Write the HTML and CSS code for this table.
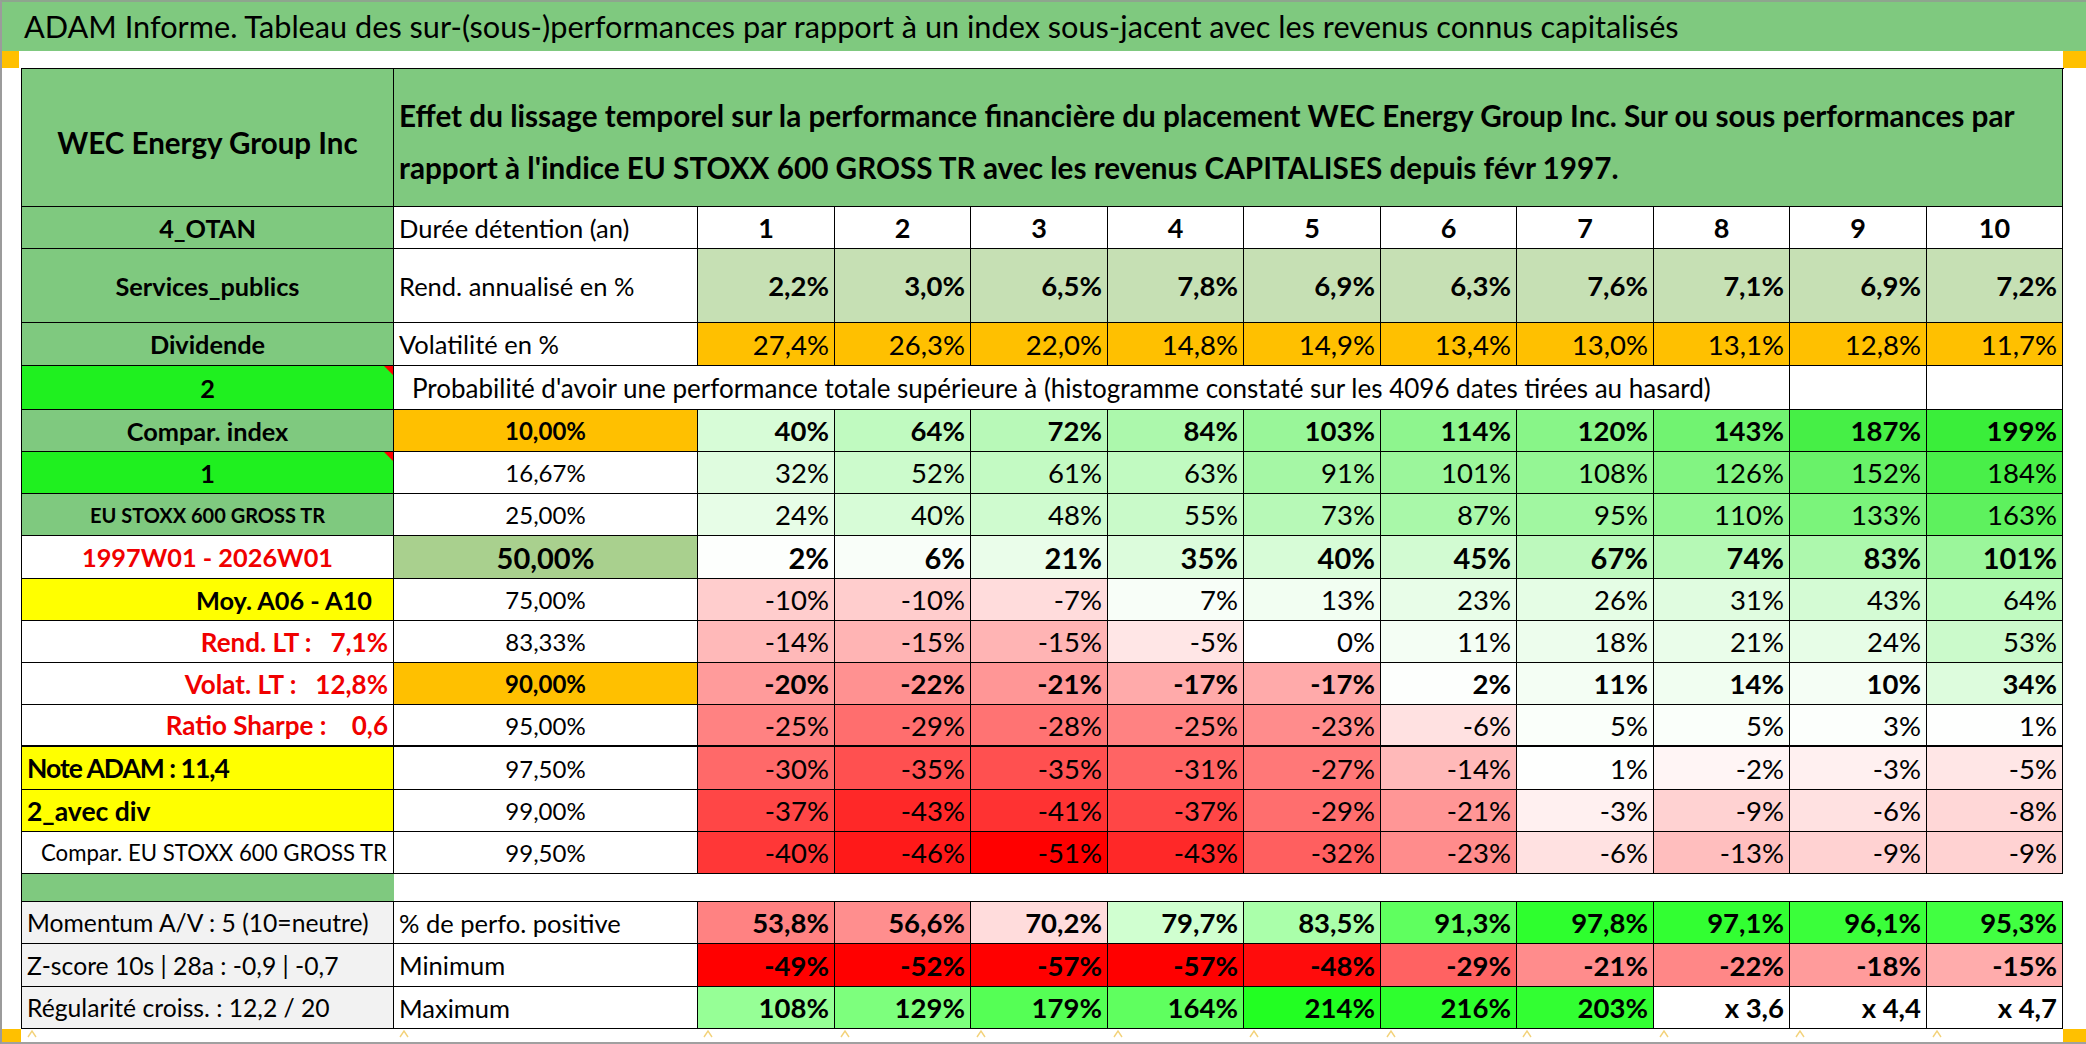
FILE: index.html
```html
<!DOCTYPE html>
<html lang="fr">
<head>
<meta charset="utf-8">
<title>ADAM Informe</title>
<link rel="stylesheet" href="styles.css">
</head>
<body>
<div class="sheet">
  <div class="title">ADAM Informe. Tableau des sur-(sous-)performances par rapport à un index sous-jacent avec les revenus connus capitalisés</div>
  <div class="gap"><span class="handle handle-l"></span><span class="handle handle-r"></span></div>
  <div class="grid">
    <!-- header -->
    <div class="c a hdr-a">WEC Energy Group Inc</div>
    <div class="c hdr-b"><span>Effet du lissage temporel sur la performance financière du placement WEC Energy Group Inc. Sur ou sous performances par</span><span>rapport à l'indice EU STOXX 600 GROSS TR avec les revenus CAPITALISES depuis févr 1997.</span></div>

    <div class="c a bold">4_OTAN</div>
    <div class="c b">Durée détention (an)</div>
    <div class="c h">1</div><div class="c h">2</div><div class="c h">3</div><div class="c h">4</div><div class="c h">5</div><div class="c h">6</div><div class="c h">7</div><div class="c h">8</div><div class="c h">9</div><div class="c h">10</div>

    <div class="c a bold">Services_publics</div>
    <div class="c b">Rend. annualisé en %</div>
    <div class="c n bold rend">2,2%</div><div class="c n bold rend">3,0%</div><div class="c n bold rend">6,5%</div><div class="c n bold rend">7,8%</div><div class="c n bold rend">6,9%</div><div class="c n bold rend">6,3%</div><div class="c n bold rend">7,6%</div><div class="c n bold rend">7,1%</div><div class="c n bold rend">6,9%</div><div class="c n bold rend">7,2%</div>

    <div class="c a bold">Dividende</div>
    <div class="c b">Volatilité en %</div>
    <div class="c n orange">27,4%</div><div class="c n orange">26,3%</div><div class="c n orange">22,0%</div><div class="c n orange">14,8%</div><div class="c n orange">14,9%</div><div class="c n orange">13,4%</div><div class="c n orange">13,0%</div><div class="c n orange">13,1%</div><div class="c n orange">12,8%</div><div class="c n orange">11,7%</div>

    <div class="c a bold lime note">2</div>
    <div class="c prob">Probabilité d'avoir une performance totale supérieure à (histogramme constaté sur les 4096 dates tirées au hasard)</div>
    <div class="c"></div><div class="c"></div>

    <div class="c a bold">Compar. index</div>
    <div class="c p bold orange">10,00%</div>
    <div class="c n bold" style="background:rgb(215,252,215)">40%</div><div class="c n bold" style="background:rgb(192,250,192)">64%</div><div class="c n bold" style="background:rgb(184,249,184)">72%</div><div class="c n bold" style="background:rgb(172,248,172)">84%</div><div class="c n bold" style="background:rgb(153,246,153)">103%</div><div class="c n bold" style="background:rgb(142,245,142)">114%</div><div class="c n bold" style="background:rgb(136,245,136)">120%</div><div class="c n bold" style="background:rgb(113,243,113)">143%</div><div class="c n bold" style="background:rgb(70,239,70)">187%</div><div class="c n bold" style="background:rgb(58,238,58)">199%</div>

    <div class="c a bold lime note">1</div>
    <div class="c p">16,67%</div>
    <div class="c n" style="background:rgb(223,252,223)">32%</div><div class="c n" style="background:rgb(204,251,204)">52%</div><div class="c n" style="background:rgb(195,250,195)">61%</div><div class="c n" style="background:rgb(193,250,193)">63%</div><div class="c n" style="background:rgb(165,247,165)">91%</div><div class="c n" style="background:rgb(155,246,155)">101%</div><div class="c n" style="background:rgb(148,246,148)">108%</div><div class="c n" style="background:rgb(130,244,130)">126%</div><div class="c n" style="background:rgb(105,242,105)">152%</div><div class="c n" style="background:rgb(73,239,73)">184%</div>

    <div class="c a bold small">EU STOXX 600 GROSS TR</div>
    <div class="c p">25,00%</div>
    <div class="c n" style="background:rgb(231,253,231)">24%</div><div class="c n" style="background:rgb(215,252,215)">40%</div><div class="c n" style="background:rgb(207,251,207)">48%</div><div class="c n" style="background:rgb(201,250,201)">55%</div><div class="c n" style="background:rgb(183,249,183)">73%</div><div class="c n" style="background:rgb(169,248,169)">87%</div><div class="c n" style="background:rgb(161,247,161)">95%</div><div class="c n" style="background:rgb(146,246,146)">110%</div><div class="c n" style="background:rgb(123,244,123)">133%</div><div class="c n" style="background:rgb(94,241,94)">163%</div>

    <div class="c a bold red white">1997W01 - 2026W01</div>
    <div class="c p bold big sage">50,00%</div>
    <div class="c n bold big" style="background:rgb(253,255,253)">2%</div><div class="c n bold big" style="background:rgb(249,254,249)">6%</div><div class="c n bold big" style="background:rgb(234,253,234)">21%</div><div class="c n bold big" style="background:rgb(220,252,220)">35%</div><div class="c n bold big" style="background:rgb(215,252,215)">40%</div><div class="c n bold big" style="background:rgb(210,251,210)">45%</div><div class="c n bold big" style="background:rgb(189,249,189)">67%</div><div class="c n bold big" style="background:rgb(182,249,182)">74%</div><div class="c n bold big" style="background:rgb(173,248,173)">83%</div><div class="c n bold big" style="background:rgb(155,246,155)">101%</div>

    <div class="c a bold yellow right moy">Moy. A06 - A10</div>
    <div class="c p">75,00%</div>
    <div class="c n" style="background:rgb(255,205,205)">-10%</div><div class="c n" style="background:rgb(255,205,205)">-10%</div><div class="c n" style="background:rgb(255,220,220)">-7%</div><div class="c n" style="background:rgb(248,254,248)">7%</div><div class="c n" style="background:rgb(242,254,242)">13%</div><div class="c n" style="background:rgb(232,253,232)">23%</div><div class="c n" style="background:rgb(229,253,229)">26%</div><div class="c n" style="background:rgb(224,252,224)">31%</div><div class="c n" style="background:rgb(212,251,212)">43%</div><div class="c n" style="background:rgb(192,250,192)">64%</div>

    <div class="c a bold red white right lt">Rend. LT :   7,1%</div>
    <div class="c p">83,33%</div>
    <div class="c n" style="background:rgb(255,185,185)">-14%</div><div class="c n" style="background:rgb(255,180,180)">-15%</div><div class="c n" style="background:rgb(255,180,180)">-15%</div><div class="c n" style="background:rgb(255,230,230)">-5%</div><div class="c n" style="background:rgb(255,255,255)">0%</div><div class="c n" style="background:rgb(244,254,244)">11%</div><div class="c n" style="background:rgb(237,253,237)">18%</div><div class="c n" style="background:rgb(234,253,234)">21%</div><div class="c n" style="background:rgb(231,253,231)">24%</div><div class="c n" style="background:rgb(203,250,203)">53%</div>

    <div class="c a bold red white right lt">Volat. LT :   12,8%</div>
    <div class="c p bold orange">90,00%</div>
    <div class="c n bold" style="background:rgb(255,155,155)">-20%</div><div class="c n bold" style="background:rgb(255,145,145)">-22%</div><div class="c n bold" style="background:rgb(255,150,150)">-21%</div><div class="c n bold" style="background:rgb(255,170,170)">-17%</div><div class="c n bold" style="background:rgb(255,170,170)">-17%</div><div class="c n bold" style="background:rgb(253,255,253)">2%</div><div class="c n bold" style="background:rgb(244,254,244)">11%</div><div class="c n bold" style="background:rgb(241,254,241)">14%</div><div class="c n bold" style="background:rgb(245,254,245)">10%</div><div class="c n bold" style="background:rgb(221,252,221)">34%</div>

    <div class="c a bold red white right lt thick">Ratio Sharpe :    0,6</div>
    <div class="c p thick">95,00%</div>
    <div class="c n thick" style="background:rgb(255,130,130)">-25%</div><div class="c n thick" style="background:rgb(255,110,110)">-29%</div><div class="c n thick" style="background:rgb(255,115,115)">-28%</div><div class="c n thick" style="background:rgb(255,130,130)">-25%</div><div class="c n thick" style="background:rgb(255,140,140)">-23%</div><div class="c n thick" style="background:rgb(255,225,225)">-6%</div><div class="c n thick" style="background:rgb(250,255,250)">5%</div><div class="c n thick" style="background:rgb(250,255,250)">5%</div><div class="c n thick" style="background:rgb(252,255,252)">3%</div><div class="c n thick" style="background:rgb(254,255,254)">1%</div>

    <div class="c a bold yellow left note-adam tight">Note ADAM : 11,4</div>
    <div class="c p">97,50%</div>
    <div class="c n" style="background:rgb(255,105,105)">-30%</div><div class="c n" style="background:rgb(255,80,80)">-35%</div><div class="c n" style="background:rgb(255,80,80)">-35%</div><div class="c n" style="background:rgb(255,100,100)">-31%</div><div class="c n" style="background:rgb(255,120,120)">-27%</div><div class="c n" style="background:rgb(255,185,185)">-14%</div><div class="c n" style="background:rgb(254,255,254)">1%</div><div class="c n" style="background:rgb(255,245,245)">-2%</div><div class="c n" style="background:rgb(255,240,240)">-3%</div><div class="c n" style="background:rgb(255,230,230)">-5%</div>

    <div class="c a bold yellow left note-adam">2_avec div</div>
    <div class="c p">99,00%</div>
    <div class="c n" style="background:rgb(255,70,70)">-37%</div><div class="c n" style="background:rgb(255,40,40)">-43%</div><div class="c n" style="background:rgb(255,50,50)">-41%</div><div class="c n" style="background:rgb(255,70,70)">-37%</div><div class="c n" style="background:rgb(255,110,110)">-29%</div><div class="c n" style="background:rgb(255,150,150)">-21%</div><div class="c n" style="background:rgb(255,240,240)">-3%</div><div class="c n" style="background:rgb(255,210,210)">-9%</div><div class="c n" style="background:rgb(255,225,225)">-6%</div><div class="c n" style="background:rgb(255,215,215)">-8%</div>

    <div class="c a white right compeu">Compar. EU STOXX 600 GROSS TR</div>
    <div class="c p">99,50%</div>
    <div class="c n" style="background:rgb(255,55,55)">-40%</div><div class="c n" style="background:rgb(255,25,25)">-46%</div><div class="c n" style="background:rgb(255,0,0)">-51%</div><div class="c n" style="background:rgb(255,40,40)">-43%</div><div class="c n" style="background:rgb(255,95,95)">-32%</div><div class="c n" style="background:rgb(255,140,140)">-23%</div><div class="c n" style="background:rgb(255,225,225)">-6%</div><div class="c n" style="background:rgb(255,190,190)">-13%</div><div class="c n" style="background:rgb(255,210,210)">-9%</div><div class="c n" style="background:rgb(255,210,210)">-9%</div>

    <div class="c a spacer-a"></div>
    <div class="c spacer-b"></div>

    <div class="c a grey left">Momentum A/V : 5 (10=neutre)</div>
    <div class="c b">% de perfo. positive</div>
    <div class="c n bold" style="background:rgb(255,130,130)">53,8%</div><div class="c n bold" style="background:rgb(255,142,142)">56,6%</div><div class="c n bold" style="background:rgb(255,220,220)">70,2%</div><div class="c n bold" style="background:rgb(208,255,208)">79,7%</div><div class="c n bold" style="background:rgb(170,255,170)">83,5%</div><div class="c n bold" style="background:rgb(95,255,95)">91,3%</div><div class="c n bold" style="background:rgb(46,255,46)">97,8%</div><div class="c n bold" style="background:rgb(50,255,50)">97,1%</div><div class="c n bold" style="background:rgb(58,255,58)">96,1%</div><div class="c n bold" style="background:rgb(65,255,65)">95,3%</div>

    <div class="c a grey left">Z-score 10s | 28a : -0,9 | -0,7</div>
    <div class="c b">Minimum</div>
    <div class="c n bold" style="background:rgb(255,0,0)">-49%</div><div class="c n bold" style="background:rgb(255,0,0)">-52%</div><div class="c n bold" style="background:rgb(255,0,0)">-57%</div><div class="c n bold" style="background:rgb(255,0,0)">-57%</div><div class="c n bold" style="background:rgb(255,12,12)">-48%</div><div class="c n bold" style="background:rgb(255,98,98)">-29%</div><div class="c n bold" style="background:rgb(255,140,140)">-21%</div><div class="c n bold" style="background:rgb(255,135,135)">-22%</div><div class="c n bold" style="background:rgb(255,155,155)">-18%</div><div class="c n bold" style="background:rgb(255,172,172)">-15%</div>

    <div class="c a grey left">Régularité croiss. : 12,2 / 20</div>
    <div class="c b">Maximum</div>
    <div class="c n bold" style="background:rgb(150,255,150)">108%</div><div class="c n bold" style="background:rgb(125,255,125)">129%</div><div class="c n bold" style="background:rgb(85,255,85)">179%</div><div class="c n bold" style="background:rgb(95,255,95)">164%</div><div class="c n bold" style="background:rgb(34,255,34)">214%</div><div class="c n bold" style="background:rgb(46,255,46)">216%</div><div class="c n bold" style="background:rgb(50,255,50)">203%</div><div class="c n bold">x 3,6</div><div class="c n bold">x 4,4</div><div class="c n bold">x 4,7</div>
  </div>
  <div class="foot">
    <span class="handle handle-bl"></span><span class="handle handle-br"></span>
    <div class="marks">
      <span class="mark"><svg width="10" height="8" viewBox="0 0 10 8"><path d="M1 7 L5 1 L9 7" /></svg></span>
      <span class="mark"><svg width="10" height="8" viewBox="0 0 10 8"><path d="M1 7 L5 1 L9 7" /></svg></span>
      <span class="mark"><svg width="10" height="8" viewBox="0 0 10 8"><path d="M1 7 L5 1 L9 7" /></svg></span>
      <span class="mark"><svg width="10" height="8" viewBox="0 0 10 8"><path d="M1 7 L5 1 L9 7" /></svg></span>
      <span class="mark"><svg width="10" height="8" viewBox="0 0 10 8"><path d="M1 7 L5 1 L9 7" /></svg></span>
      <span class="mark"><svg width="10" height="8" viewBox="0 0 10 8"><path d="M1 7 L5 1 L9 7" /></svg></span>
      <span class="mark"><svg width="10" height="8" viewBox="0 0 10 8"><path d="M1 7 L5 1 L9 7" /></svg></span>
      <span class="mark"><svg width="10" height="8" viewBox="0 0 10 8"><path d="M1 7 L5 1 L9 7" /></svg></span>
      <span class="mark"><svg width="10" height="8" viewBox="0 0 10 8"><path d="M1 7 L5 1 L9 7" /></svg></span>
      <span class="mark"><svg width="10" height="8" viewBox="0 0 10 8"><path d="M1 7 L5 1 L9 7" /></svg></span>
      <span class="mark"><svg width="10" height="8" viewBox="0 0 10 8"><path d="M1 7 L5 1 L9 7" /></svg></span>
      <span class="mark"><svg width="10" height="8" viewBox="0 0 10 8"><path d="M1 7 L5 1 L9 7" /></svg></span>
    </div>
  </div>
</div>
</body>
</html>
```

FILE: styles.css
```css
html, body {
  margin: 0;
  padding: 0;
  background: #ffffff;
}

body {
  font-family: Lato, "Noto Sans", "Liberation Sans", sans-serif;
  color: #000;
}

.sheet {
  width: 2086px;
  height: 1044px;
  box-sizing: border-box;
  border-left: 2px solid #9b9b9b;
  border-top: 2px solid #8ea58e;
  border-bottom: 2px solid #a0a0a0;
  display: flex;
  flex-direction: column;
  overflow: hidden;
}

.title {
  height: 49px;
  flex: none;
  background: #7fc97f;
  padding-left: 22px;
  font-size: 30.7px;
  line-height: 49px;
  white-space: nowrap;
}

.gap {
  height: 17px;
  flex: none;
  position: relative;
}

.handle {
  position: absolute;
  background: #ffc000;
}

.handle-l { left: 0; top: 0; width: 17px; height: 17px; }
.handle-r { right: 0; top: 0; width: 23px; height: 17px; }

.grid {
  flex: none;
  margin-left: 19px;
  width: 2042px;
  display: grid;
  grid-template-columns: 372px 304px 137px 136px 137px 136px 137px 136px 137px 136px 137px 136px;
  grid-template-rows: 138px 42px 74px 43px 44px 42px 42px 42px 43px 42px 42px 42px 42px 43px 42px 42px 28px 42px 43px 42px;
  border-top: 1px solid #000;
  border-left: 1px solid #000;
}

.c {
  box-sizing: border-box;
  border-right: 1px solid #000;
  border-bottom: 1px solid #000;
  display: flex;
  align-items: center;
  white-space: pre;
  font-size: 25.5px;
  overflow: hidden;
  position: relative;
  background: #fff;
}

.bold { font-weight: 700; }

/* column A */
.a {
  background: #7fc97f;
  justify-content: center;
  padding: 0 6px;
  font-size: 25.3px;
}
.a.left { justify-content: flex-start; padding-left: 5px; }
.a.right { justify-content: flex-end; padding-right: 5px; }
.a.moy { padding-right: 21px; }
.a.white { background: #fff; }
.a.yellow { background: #ffff00; }
.a.lime { background: #1ff01f; }
.a.grey { background: #f2f2f2; font-size: 24.7px; }
.a.small { font-size: 20px; }
.a.lt { font-size: 26px; }
.a.note-adam { font-size: 26.5px; }
.a.tight { letter-spacing: -1px; }
.a.compeu { font-size: 22.2px; padding-right: 6px; }
.red { color: #f00000; }

.note::after {
  content: "";
  position: absolute;
  top: 0;
  right: 0;
  border-top: 9px solid #f00;
  border-left: 9px solid transparent;
}

/* header */
.hdr-a {
  font-size: 29.5px;
  font-weight: 700;
  padding-top: 10px;
}
.hdr-b {
  grid-column: span 11;
  background: #7fc97f;
  flex-direction: column;
  align-items: flex-start;
  justify-content: center;
  padding: 8px 0 0 5px;
  font-size: 29.7px;
  font-weight: 700;
  line-height: 52px;
}

/* column B labels */
.b {
  padding-left: 5px;
}
.p {
  justify-content: center;
  font-size: 24px;
}
.prob {
  grid-column: span 9;
  padding-left: 18px;
  font-size: 26px;
}

/* numbers */
.h {
  justify-content: center;
  font-weight: 700;
  font-size: 27px;
}
.n {
  justify-content: flex-end;
  padding-right: 5px;
  font-size: 27.5px;
}
.p.big, .n.big { font-size: 29px; }

.rend { background: #c6e0b4; }
.orange { background: #ffc000; }
.sage { background: #a9d08e; }

.thick { border-bottom-width: 2px; }

.spacer-a {
  border-right: none;
}
.spacer-b {
  grid-column: span 11;
  border-right: none;
}

.foot {
  flex: 1;
  position: relative;
}
.handle-bl { left: 0; top: 0; width: 19px; height: 13px; }
.handle-br { right: 0; top: 0; width: 23px; height: 13px; }

.marks {
  margin-left: 19px;
  width: 2042px;
  display: grid;
  grid-template-columns: 372px 304px 137px 136px 137px 136px 137px 136px 137px 136px 137px 136px;
  padding-top: 1px;
}
.mark {
  display: block;
  height: 8px;
  padding-left: 6px;
}
.mark svg {
  display: block;
}
.mark path {
  fill: none;
  stroke: #f3d27a;
  stroke-width: 1.4;
}
```
